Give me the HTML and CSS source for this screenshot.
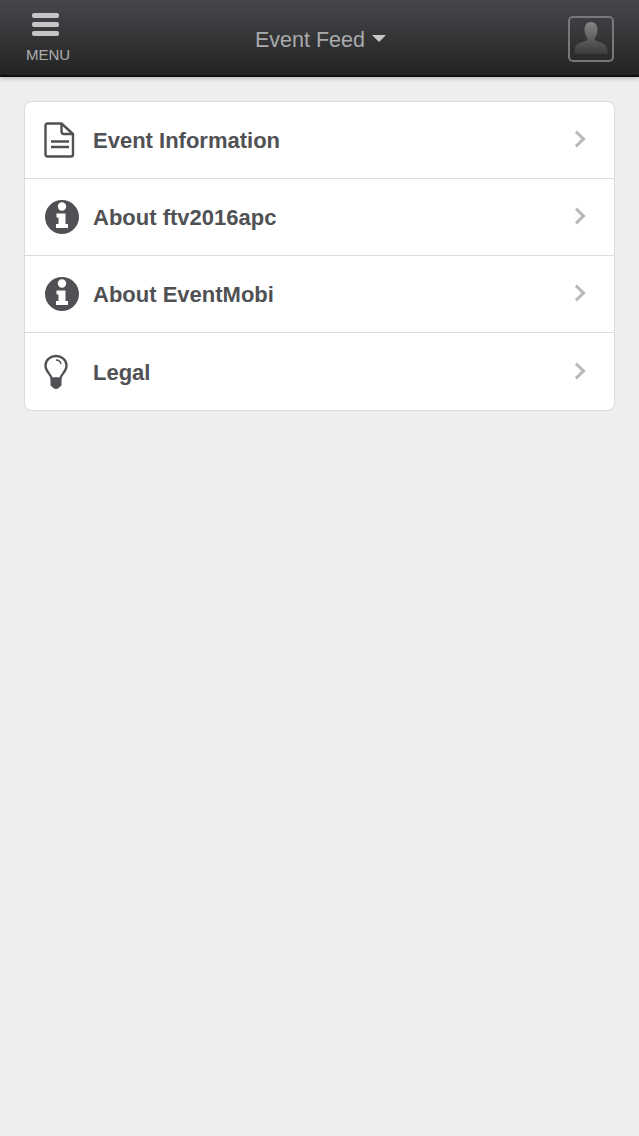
FILE: index.html
```html
<!DOCTYPE html>
<html lang="en">

<head>
  <meta charset="UTF-8">
  <meta name="viewport" content="width=device-width, initial-scale=1.0">
  <title>Event Feed</title>
  <link rel="stylesheet" href="styles.css">
</head>

<body>
  <header class="topbar">
    <div class="menu-btn">
      <div class="burger"><span></span><span></span><span></span></div>
      <div class="menu-label">MENU</div>
    </div>
    <div class="title">Event Feed<span class="caret"></span></div>
    <div class="avatar">
      <svg width="42" height="42" viewBox="0 0 42 42">
        <defs>
          <linearGradient id="person" x1="0" y1="0" x2="0" y2="1">
            <stop offset="0" stop-color="#858787"/>
            <stop offset="1" stop-color="#3a3b3c"/>
          </linearGradient>
        </defs>
        <path fill="url(#person)" d="M21 4c4 0 6.500 3 6.500 7.500 0 3-1 6-2.500 8-.6.900-.4 2.500 1 3.200 3 1.400 9.500 2.300 11 6.800.5 1.500.5 4 .5 6.500H4.500c0-2.500 0-5 .5-6.500 1.500-4.500 8-5.400 11-6.800 1.400-.7 1.600-2.300 1-3.200-1.500-2-2.500-5-2.500-8C14.500 7 17 4 21 4z"/>
      </svg>
    </div>
  </header>

  <ul class="card">
    <li class="row">
      <span class="row-icon">
        <svg width="31" height="36" viewBox="0 0 31 36">
          <path fill="none" stroke="#505154" stroke-width="2.400" stroke-linejoin="round" d="M3.500 1.500h14l11.500 10.500v20.500a2 2 0 0 1-2 2H3.500a2 2 0 0 1-2-2v-29a2 2 0 0 1 2-2z"/>
          <path fill="none" stroke="#505154" stroke-width="2.400" d="M17.500 2v7.500a2.500 2.500 0 0 0 2.500 2.500h9M7 19.500h18M7 25h18"/>
        </svg>
      </span>
      <span class="row-label">Event Information</span>
      <span class="chevron"></span>
    </li>
    <li class="row">
      <span class="row-icon">
        <svg width="36" height="36" viewBox="0 0 36 36">
          <circle cx="18" cy="18" r="17" fill="#505154"/>
          <circle cx="18" cy="7.500" r="4.200" fill="#fff"/>
          <path fill="#fff" d="M12.500 14.500h9V25h2.500v4H12v-4h2.500v-6.500h-2z"/>
        </svg>
      </span>
      <span class="row-label">About ftv2016apc</span>
      <span class="chevron"></span>
    </li>
    <li class="row">
      <span class="row-icon">
        <svg width="36" height="36" viewBox="0 0 36 36">
          <circle cx="18" cy="18" r="17" fill="#505154"/>
          <circle cx="18" cy="7.500" r="4.200" fill="#fff"/>
          <path fill="#fff" d="M12.500 14.500h9V25h2.500v4H12v-4h2.500v-6.500h-2z"/>
        </svg>
      </span>
      <span class="row-label">About EventMobi</span>
      <span class="chevron"></span>
    </li>
    <li class="row">
      <span class="row-icon">
        <svg width="24" height="36" viewBox="0 0 24 36">
          <path fill="none" stroke="#505154" stroke-width="2.400" d="M7.500 24.500c0-4-6-6.500-6-13C1.500 6 6.500 2 12 2s10.500 4 10.500 9.500c0 6.500-6 9-6 13z"/>
          <path fill="none" stroke="#505154" stroke-width="1.400" d="M12 6c2.500 0 4.500 1.500 5 4"/>
          <path fill="#505154" d="M6.500 25h11v6c0 1-1 1.500-2 2-.5 1.200-2 2-3.500 2s-3-.8-3.500-2c-1-.5-2-1-2-2z"/>
        </svg>
      </span>
      <span class="row-label">Legal</span>
      <span class="chevron"></span>
    </li>
  </ul>
</body>

</html>
```

FILE: styles.css
```css
html,
body {
  margin: 0;
  padding: 0;
}

body {
  min-height: 1136px;
  background: #eeeef0;
  font-family: 'Liberation Sans', Arial, sans-serif;
}

.topbar {
  height: 77px;
  box-sizing: border-box;
  display: flex;
  align-items: flex-start;
  justify-content: space-between;
  background: linear-gradient(#46474b, #232323);
  border-bottom: 2px solid #0f0f0f;
  box-shadow: 0 2px 4px rgba(0, 0, 0, 0.2);
  padding: 0 25px 0 26px;
}

.menu-btn {
  width: 44px;
  padding-top: 13px;
}

.burger {
  width: 27px;
  margin-left: 6px;
  display: flex;
  flex-direction: column;
  gap: 4px;
}

.burger span {
  height: 5px;
  border-radius: 2px;
  background: #c4c5c6;
}

.menu-label {
  margin-top: 11px;
  font-size: 15px;
  line-height: 16px;
  color: #aeafb0;
}

.title {
  margin-top: 27px;
  margin-left: 3px;
  font-size: 21.5px;
  line-height: 26px;
  color: #a9aaac;
  display: flex;
  align-items: center;
}

.caret {
  margin-left: 7px;
  margin-bottom: 4px;
  border-left: 7px solid transparent;
  border-right: 7px solid transparent;
  border-top: 7px solid #c6c7c8;
}

.avatar {
  width: 46px;
  height: 46px;
  margin-top: 16px;
  box-sizing: border-box;
  border: 2px solid #77787a;
  border-radius: 5px;
  overflow: hidden;
}

.avatar svg {
  display: block;
}

.card {
  list-style: none;
  margin: 24px 24px 0;
  padding: 0;
  background: #fff;
  border: 1px solid #dcdcde;
  border-radius: 8px;
}

.row {
  height: 76px;
  display: flex;
  align-items: center;
  border-bottom: 1px solid #dcdcde;
}

.row:last-child {
  height: 77px;
  border-bottom: 0;
}

.row-icon {
  width: 68px;
  padding-left: 19px;
  box-sizing: border-box;
  display: flex;
}

.row-label {
  flex: 1;
  padding-top: 2px;
  font-size: 22px;
  font-weight: bold;
  color: #505154;
}

.chevron {
  width: 9px;
  height: 9px;
  margin-right: 31px;
  margin-bottom: 2px;
  border-top: 3.500px solid #b9b9bb;
  border-right: 3.500px solid #b9b9bb;
  transform: rotate(45deg);
}
```
